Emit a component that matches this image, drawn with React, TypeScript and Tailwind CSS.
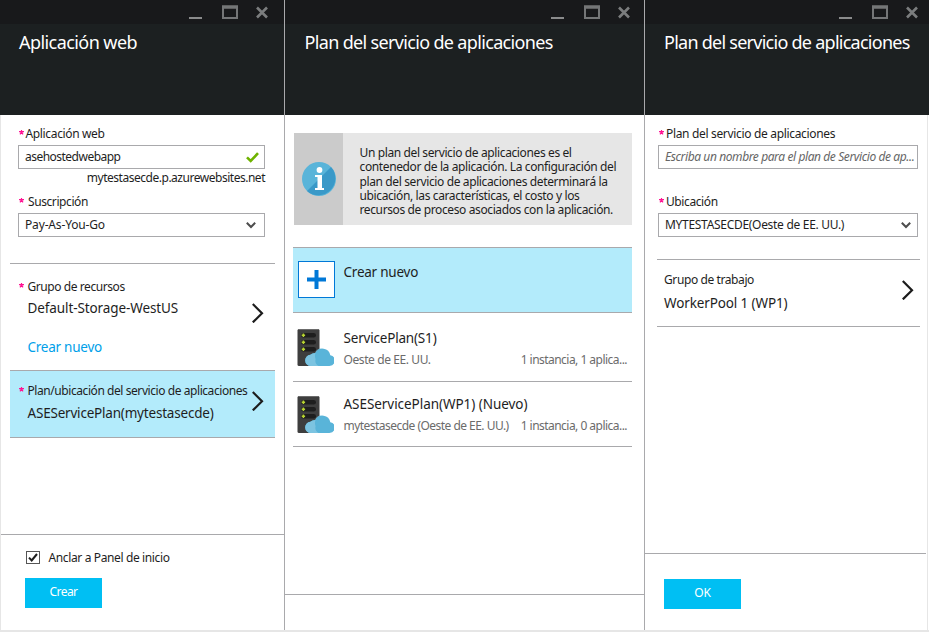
import type { ReactNode } from 'react';
import { clsx } from 'clsx';

function TextLine({ className, children }: { className?: string; children: ReactNode }) {
  return <div className={clsx('h-4 leading-4 whitespace-nowrap', className)}>{children}</div>;
}

function ValueLine({ className, children }: { className?: string; children: ReactNode }) {
  return <div className={clsx('h-5 text-[13.5px] leading-5 whitespace-nowrap', className)}>{children}</div>;
}

function Required() {
  return (
    <svg className="mt-1 h-[5px] w-[5px] shrink-0" viewBox="0 0 5 5" fill="none" stroke="#ff1493" strokeWidth="1.200">
      <path d="M2.500 0v2.400M0 1.600h5M1 4.400l1.500-2.400L4 4.400" />
    </svg>
  );
}

function ChevronRight() {
  return (
    <svg className="h-5 w-3 shrink-0" viewBox="0 0 12 20" fill="none" stroke="#1c1c1c" strokeWidth="2.2">
      <path d="M0.800 1L10 10.200L0.800 19.400" />
    </svg>
  );
}

function ChevronDown() {
  return (
    <svg className="h-[7px] w-[10px] shrink-0" viewBox="0 0 10 7" fill="none" stroke="#4d4d4d" strokeWidth="2">
      <path d="M0.8 0.700L5 5L9.200 0.700" />
    </svg>
  );
}

function WindowControls({ className }: { className: string }) {
  return (
    <svg className={clsx('ml-auto block h-6 w-20', className)} viewBox="0 0 80 24" fill="none">
      <path d="M1 18h13" stroke="#8a8b8c" strokeWidth="2" />
      <rect x="35" y="7" width="14" height="11" stroke="#747677" strokeWidth="2" />
      <path d="M34 7h16" stroke="#747677" strokeWidth="3.500" />
      <path d="M69 7.500l10 10M79 7.500l-10 10" stroke="#7b7d7e" strokeWidth="2.600" />
    </svg>
  );
}

function Header({ title, titleClass, controlsClass }: { title: string; titleClass: string; controlsClass: string }) {
  return (
    <header className="h-[115px] bg-[#1c2021]">
      <div className="h-6 bg-[#18191b]">
        <WindowControls className={controlsClass} />
      </div>
      <h1 className={clsx('pt-1.5 text-[18px] leading-6 whitespace-nowrap text-white', titleClass)}>{title}</h1>
    </header>
  );
}

function ServerIcon() {
  return (
    <svg className="h-[37px] w-[37px] shrink-0" viewBox="0 0 37 37">
      <rect x="0.5" y="0" width="22" height="37" rx="1.5" fill="#3e3e3e" />
      <path d="M1.5 0.5h20" stroke="#6b6b6b" />
      {[4, 11, 18].map((y) => (
        <g key={y}>
          <rect x="4" y={y} width="15" height="4.6" rx="2.3" fill="#1e1e1e" />
          <path d={`M4.7 ${y + 2.3}h3.4M6.4 ${y + 0.6}v3.4`} stroke="#b8d432" strokeWidth="1.5" />
        </g>
      ))}
      <path d="M14 37a5.6 5.6 0 0 1-.6-11.2A5.7 5.7 0 0 1 18.3 24a8 8 0 0 1 15 2.300a5.400 5.400 0 0 1-.9 10.700z" fill="#59b4d9" />
      <path d="M14 37a5.600 5.600 0 0 1-5.700-5.600a5.600 5.600 0 0 1 5.100-5.600A6 6 0 0 1 18 24.300a8 8 0 0 1 5.600-5.100a8.300 8.300 0 0 0-5 11a6 6 0 0 0 3 6.800z" fill="#7cc4e1" />
    </svg>
  );
}

function PlanRow({ name, nameClass, place, placeClass, usage, className }: {
  name: string; nameClass: string; place: string; placeClass: string; usage: string; className: string;
}) {
  return (
    <div className={clsx('flex border-b border-[#a9a9ac] pl-1', className)}>
      <ServerIcon />
      <div className="ml-[9.500px] flex-1 pr-[5px]">
        <ValueLine className={nameClass}>{name}</ValueLine>
        <div className="mt-1 flex justify-between text-[#6b6b6b]">
          <TextLine className={placeClass}>{place}</TextLine>
          <TextLine className="tracking-[-0.53px]">{usage}</TextLine>
        </div>
      </div>
    </div>
  );
}

export default function App() {
  return (
    <div className="h-[632px] w-[929px] overflow-hidden bg-[#e6e6e6] font-['Noto_Sans','Open_Sans',sans-serif] text-[12px] text-[#1e1e1e]">
      <div className="flex h-[630px] bg-white">
        {/* Web app */}
        <section className="flex w-[285px] flex-col border-r border-[#a9a9ac]">
          <Header title="Aplicación web" titleClass="pl-[19px] tracking-[-0.57px]" controlsClass="mr-4" />
          <div className="flex flex-1 flex-col border-l border-[#e6e6e6]">
            <div className="flex h-[419px] flex-col pl-[9px]">
              <div className="mt-[11px] flex pl-[9px]">
                <Required />
                <TextLine className="ml-[1.500px] tracking-[-0.35px]">Aplicación web</TextLine>
              </div>
              <div className="mt-[3px] ml-2 flex h-6 w-[247px] items-center justify-between border border-[#a9a9ac] pr-[5px] pl-1.5">
                <TextLine className="tracking-[-0.52px]">asehostedwebapp</TextLine>
                <svg className="h-[11px] w-[13px]" viewBox="0 0 13 11" fill="none" stroke="#6fb300" strokeWidth="2.600">
                  <path d="M1 5.400L4.700 9L12 1.200" />
                </svg>
              </div>
              <TextLine className="mt-px w-[255px] text-right tracking-[-0.48px]">mytestasecde.p.azurewebsites.net</TextLine>
              <div className="mt-2 flex pl-[9px]">
                <Required />
                <TextLine className="ml-1 tracking-[-0.41px]">Suscripción</TextLine>
              </div>
              <div className="mt-[3px] ml-2 flex h-6 w-[247px] items-center justify-between border border-[#a9a9ac] pr-2 pl-1.5">
                <TextLine className="tracking-[-0.16px]">Pay-As-You-Go</TextLine>
                <ChevronDown />
              </div>
              <div className="mt-[26px] flex h-[108px] w-[265px] items-start border-y border-[#a9a9ac] pr-[11.500px] pl-[9px]">
                <div className="mt-[15px]"><Required /></div>
                <div className="ml-[3.500px] flex-1">
                  <TextLine className="mt-[15px] tracking-[-0.43px]">Grupo de recursos</TextLine>
                  <ValueLine className="mt-[3px] tracking-[-0.100px]">Default-Storage-WestUS</ValueLine>
                  <ValueLine className="mt-[19px] tracking-[-0.250px] text-[#00a0e9]">Crear nuevo</ValueLine>
                </div>
                <div className="mt-[39px]"><ChevronRight /></div>
              </div>
              <div className="flex h-[67px] w-[265px] items-start border-b border-[#a9a9ac] bg-[#b3ebfb] pl-[9px]">
                <div className="mt-[12px]"><Required /></div>
                <div className="ml-[3.500px] w-[225px]">
                  <TextLine className="mt-[12px] tracking-[-0.430px]">Plan/ubicación del servicio de aplicaciones</TextLine>
                  <ValueLine className="mt-1 tracking-[-0.200px]">ASEServicePlan(mytestasecde)</ValueLine>
                </div>
                <div className="mt-5 -ml-px"><ChevronRight /></div>
              </div>
            </div>
            <footer className="flex-1 border-t border-[#a9a9ac] pl-6">
              <div className="mt-[15px] flex items-center pl-px">
                <svg className="h-[14px] w-[14px]" viewBox="0 0 14 14" fill="none">
                  <rect x="0.5" y="0.5" width="13" height="12" stroke="#555" />
                  <path d="M3 6.600L5.700 9.500L11 3" stroke="#1e1e1e" strokeWidth="2" />
                </svg>
                <TextLine className="ml-[8.500px] tracking-[-0.370px]">Anclar a Panel de inicio</TextLine>
              </div>
              <button className="mt-3 block h-[30px] w-[77px] bg-[#00bff3] pb-0.5 text-center tracking-[-0.600px] text-white">Crear</button>
            </footer>
          </div>
        </section>

        {/* Plan picker */}
        <section className="flex w-[360px] flex-col border-r border-[#a9a9ac]">
          <Header title="Plan del servicio de aplicaciones" titleClass="pl-[19.500px] tracking-[-0.660px]" controlsClass="mr-[14px]" />
          <div className="flex h-[479px] flex-col pl-2">
            <div className="mt-[18px] ml-px flex h-[92px] w-[338px] bg-[#e6e6e6]">
              <div className="flex w-[49px] items-center justify-center bg-[#cbcbcb]">
                <svg className="h-[34px] w-[34px]" viewBox="0 0 34 34">
                  <circle cx="17" cy="17" r="17" fill="#59b4d9" />
                  <path d="M29 5A17 17 0 0 1 5 29z" fill="#3a99c8" />
                  <circle cx="17.500" cy="8" r="2.900" fill="#fff" />
                  <path d="M13 13h7v13h2v2h-9v-2h2.500V15h-2.500z" fill="#fff" />
                </svg>
              </div>
              <p className="pt-[13px] pl-[16.500px] leading-[14.300px] tracking-[-0.380px] whitespace-nowrap">
                Un plan del servicio de aplicaciones es el<br />
                contenedor de la aplicación. La configuración del<br />
                plan del servicio de aplicaciones determinará la<br />
                ubicación, las características, el costo y los<br />
                recursos de proceso asociados con la aplicación.
              </p>
            </div>
            <div className="mt-[22px] flex h-[66px] w-[339px] border-y border-[#a9a9ac] bg-[#b3ebfb] pl-[5px]">
              <div className="mt-[13px] flex h-[37px] w-[37px] items-center justify-center border border-[#0078d7] bg-white">
                <svg className="h-[19px] w-[19px]" viewBox="0 0 19 19" stroke="#0078d7" strokeWidth="4">
                  <path d="M0 9.500h19M9.500 0v19" />
                </svg>
              </div>
              <ValueLine className="mt-[14px] ml-[8.500px] tracking-[-0.230px]">Crear nuevo</ValueLine>
            </div>
            <div className="w-[339px]">
              <PlanRow className="h-[69px] pt-4" name="ServicePlan(S1)" nameClass="-mt-px tracking-[-0.190px]" place="Oeste de EE. UU." placeClass="tracking-[-0.400px]" usage="1 instancia, 1 aplica..." />
              <PlanRow className="h-[65px] pt-[14px]" name="ASEServicePlan(WP1) (Nuevo)" nameClass="-mt-0.5 tracking-[-0.050px]" place="mytestasecde (Oeste de EE. UU.)" placeClass="tracking-[-0.530px]" usage="1 instancia, 0 aplica..." />
            </div>
          </div>
          <footer className="flex-1 border-t border-[#a9a9ac]" />
        </section>

        {/* New plan */}
        <section className="flex flex-1 flex-col">
          <Header title="Plan del servicio de aplicaciones" titleClass="pl-[19px] tracking-[-0.740px]" controlsClass="mr-[11px]" />
          <div className="mr-px flex flex-1 flex-col border-r border-[#e6e6e6]">
            <div className="flex h-[438px] flex-col pl-3">
              <div className="mt-[11px] flex pl-[2px]">
                <Required />
                <TextLine className="ml-[2px] tracking-[-0.330px]">Plan del servicio de aplicaciones</TextLine>
              </div>
              <div className="mt-[3px] ml-px flex h-6 w-[260px] items-center border border-[#a9a9ac] pl-1.5">
                <TextLine className="tracking-[-0.400px] text-[#666] italic">Escriba un nombre para el plan de Servicio de ap...</TextLine>
              </div>
              <div className="mt-[25px] flex pl-[2px]">
                <Required />
                <TextLine className="ml-[2px] tracking-[-0.400px]">Ubicación</TextLine>
              </div>
              <div className="mt-[3px] ml-px flex h-6 w-[260px] items-center justify-between border border-[#a9a9ac] pr-1.5 pl-1.5">
                <TextLine className="tracking-[-0.300px]">MYTESTASECDE(Oeste de EE. UU.)</TextLine>
                <ChevronDown />
              </div>
              <div className="mt-[22px] flex h-[68px] w-[263px] items-start justify-between border-y border-[#a9a9ac] pr-1.5 pl-[7px]">
                <div>
                  <TextLine className="mt-3 tracking-[-0.400px]">Grupo de trabajo</TextLine>
                  <ValueLine className="mt-[5px] tracking-[-0.120px]">WorkerPool 1 (WP1)</ValueLine>
                </div>
                <div className="mt-5"><ChevronRight /></div>
              </div>
            </div>
            <footer className="mr-px flex-1 border-t border-[#a9a9ac] pl-[19px]">
              <button className="mt-[25px] block h-[30px] w-[77px] bg-[#00bff3] pb-0.5 text-center tracking-[-0.200px] text-white">OK</button>
            </footer>
          </div>
        </section>
      </div>
    </div>
  );
}
